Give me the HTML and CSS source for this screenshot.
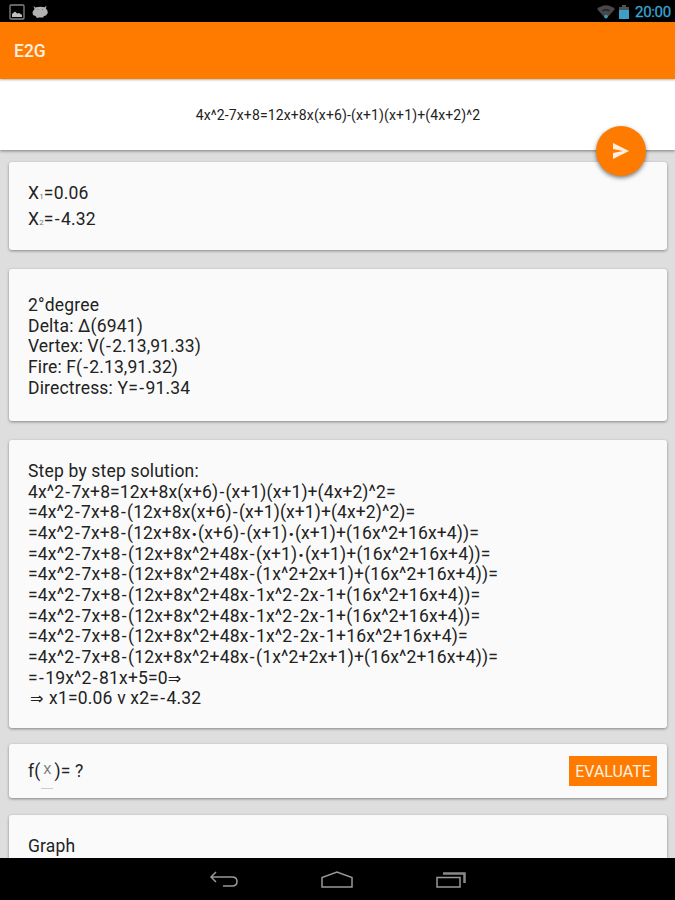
FILE: index.html
```html
<!DOCTYPE html>
<html lang="en">
<head>
<meta charset="utf-8">
<title>E2G</title>
<link rel="stylesheet" href="styles.css">
</head>
<body>
<div class="screen">
  <header class="status">
    <svg class="status-icon" width="16" height="16" viewBox="0 0 16 16"><rect x="1" y="1" width="14" height="14" rx="1" fill="none" stroke="#858585" stroke-width="1.3"/><path d="M3 13V10l3-2.500 2 2 2-.5 3 2v2z" fill="#c0c0c0"/></svg>
    <svg class="status-icon" width="16" height="14" viewBox="0 0 16 14"><path d="M1.5 1l2 1.600Q8 1 12.500 2.200L14.500.7l-.6 2.800Q16 5 15.800 8L14 10.500l-2 .5-1 1.500H7L5 13l-1.500-2L1 10 .5 7l2-3z" fill="#b2b2b2"/><circle cx="6" cy="4.500" r=".6" fill="#777"/><circle cx="10.500" cy="4.500" r=".6" fill="#777"/></svg>
    <span class="spacer"></span>
    <svg class="wifi" width="18" height="14" viewBox="0 0 18 14"><path d="M0 4Q9-3.500 18 4L9 14z" fill="#484848"/><path d="M5.500 6Q9 3.500 12.500 6" fill="none" stroke="#222" stroke-width="1.500"/><circle cx="9" cy="11.500" r="1.800" fill="#329fca"/></svg>
    <svg class="battery" width="10" height="14" viewBox="0 0 10 14"><path d="M0 2h3V0h4v2h3v3H0z" fill="#4b5558"/><path d="M0 5h10v9H0z" fill="#3b9fc8"/></svg>
    <span class="clock">20:00</span>
  </header>
  <div class="appbar">E2G</div>
  <section class="equation">
    <span>4x^2-7x+8=12x+8x(x+6)-(x+1)(x+1)+(4x+2)^2</span>
    <button class="fab" aria-label="Solve"><svg width="16" height="16" viewBox="0 0 16 16"><path d="M0 0L16 8 0 16V10L10 8 0 6z" fill="#ffeedd"/></svg></button>
  </section>
  <main class="content">
    <section class="card roots">
      <div>X<span class="sub">1</span>=0.06</div>
      <div>X<span class="sub">2</span>=<i>-</i>4.32</div>
    </section>
    <section class="card details">
      <div>2°degree</div>
      <div>Delta: Δ(6941)</div>
      <div class="tight">Vertex: V(<i>-</i>2.13,91.33)</div>
      <div class="tight">Fire: F(<i>-</i>2.13,91.32)</div>
      <div>Directress: Y=<i>-</i>91.34</div>
    </section>
    <section class="card steps">
      <div>Step by step solution:</div>
      <div class="tight">4x^2<i>-</i>7x+8=12x+8x(x+6)<i>-</i>(x+1)(x+1)+(4x+2)^2=</div>
      <div class="tight">=4x^2<i>-</i>7x+8<i>-</i>(12x+8x(x+6)<i>-</i>(x+1)(x+1)+(4x+2)^2)=</div>
      <div class="tight">=4x^2<i>-</i>7x+8<i>-</i>(12x+8x<span class="dot">•</span>(x+6)<i>-</i>(x+1)<span class="dot">•</span>(x+1)+(16x^2+16x+4))=</div>
      <div>=4x^2<i>-</i>7x+8<i>-</i>(12x+8x^2+48x<i>-</i>(x+1)<span class="dot">•</span>(x+1)+(16x^2+16x+4))=</div>
      <div>=4x^2<i>-</i>7x+8<i>-</i>(12x+8x^2+48x<i>-</i>(1x^2+2x+1)+(16x^2+16x+4))=</div>
      <div>=4x^2<i>-</i>7x+8<i>-</i>(12x+8x^2+48x<i>-</i>1x^2<i>-</i>2x<i>-</i>1+(16x^2+16x+4))=</div>
      <div>=4x^2<i>-</i>7x+8<i>-</i>(12x+8x^2+48x<i>-</i>1x^2<i>-</i>2x<i>-</i>1+(16x^2+16x+4))=</div>
      <div>=4x^2<i>-</i>7x+8<i>-</i>(12x+8x^2+48x<i>-</i>1x^2<i>-</i>2x<i>-</i>1+16x^2+16x+4)=</div>
      <div>=4x^2<i>-</i>7x+8<i>-</i>(12x+8x^2+48x<i>-</i>(1x^2+2x+1)+(16x^2+16x+4))=</div>
      <div>=<i>-</i>19x^2<i>-</i>81x+5=0<span class="arrow">⇒</span></div>
      <div><span class="arrow lead">⇒</span> x1=0.06 v x2=<i>-</i>4.32</div>
    </section>
    <section class="card evaluate">
      <span>f(</span><span class="field">X</span><span>)= ?</span>
      <span class="spacer"></span>
      <button class="button">EVALUATE</button>
    </section>
    <section class="card graph">Graph</section>
  </main>
  <nav class="navbar">
    <svg width="30" height="18" viewBox="0 0 30 18"><path d="M7 1L2 6l5 5M2 6h21q5 0 5 4.500T23 15h-9" fill="none" stroke="#999" stroke-width="1.500"/></svg>
    <svg width="34" height="18" viewBox="0 0 34 18"><path d="M2 16V6.500L17 1l15 5.500V16z" fill="none" stroke="#999" stroke-width="1.500"/></svg>
    <svg width="32" height="18" viewBox="0 0 32 18"><path d="M2 6.500h23V16H2z" fill="none" stroke="#999" stroke-width="1.500"/><path d="M8 2.500h21.500V12" fill="none" stroke="#8a8a8a" stroke-width="2.500"/></svg>
  </nav>
</div>
</body>
</html>
```
FILE: styles.css
```css
* { box-sizing: border-box; }
body { margin: 0; font-family: Roboto, "Noto Sans", sans-serif; color: #222; }
.screen { width: 675px; height: 900px; display: flex; flex-direction: column; overflow: hidden; background: #dedede; }
.spacer { flex: 1; }
.status { height: 22px; flex: none; background: #000; display: flex; align-items: center; padding: 2px 5px 0 9px; }
.status-icon { margin-right: 7px; }
.wifi { margin-right: 4px; }
.battery { margin-right: 6px; }
.clock { color: #3ba4d0; font-size: 15px; line-height: 20px; -webkit-text-stroke: .3px #3ba4d0; width: 35px; letter-spacing: -.3px; }
.appbar { height: 57px; flex: none; background: #ff7b00; color: #fff0e0; font-size: 17.500px; font-weight: 500; line-height: 59px; padding-left: 14px; box-shadow: 0 1px 2px rgba(0,0,0,.3); z-index: 1; }
.equation { position: relative; height: 71px; flex: none; background: #fff; display: flex; justify-content: center; align-items: center; font-size: 14px; letter-spacing: .13px; padding: 1px 0 0 1px; box-shadow: 0 1px 3px rgba(0,0,0,.45); }
.fab { position: absolute; right: 29px; top: 47px; width: 50px; height: 50px; border: 0; border-radius: 50%; background: #ff7b00; display: flex; align-items: center; justify-content: center; padding: 0; box-shadow: 0 2px 4px rgba(0,0,0,.5); }
.content { flex: 1; min-height: 0; overflow: hidden; padding: 12px 8px 0 9px; font-size: 17.500px; line-height: 20.650px; white-space: nowrap; letter-spacing: .18px; }
/* minus signs get a little extra air */
.content i { font-style: normal; padding: 0 1.200px; }
.tight { letter-spacing: .1px; }
.card { background: #fafafa; border-radius: 3px; box-shadow: 0 1px 3px rgba(0,0,0,.4); padding: 0 19px; }
.roots { height: 88px; padding-top: 18px; line-height: 26px; margin-bottom: 19px; }
.roots div { height: 26px; }
.sub { font-size: 8px; line-height: 1; color: #777; }
.details { height: 152px; padding-top: 26px; margin-bottom: 19px; }
.steps { height: 288px; padding-top: 21px; margin-bottom: 16px; }
.dot { display: inline-block; width: 7.500px; text-align: center; font-family: "DejaVu Sans", sans-serif; font-size: 11px; vertical-align: 1px; line-height: 1; }
.arrow { display: inline-block; font-family: "DejaVu Sans", sans-serif; font-size: 16px; line-height: 1; }
.lead { padding: 0 1px 0 2px; }
.evaluate { height: 54px; display: flex; align-items: center; margin-bottom: 17px; padding-right: 10px; }
.field { width: 12px; height: 32px; font-size: 13px; line-height: 25px; color: #777; border-bottom: 1px solid #ccc; text-align: center; margin: 3px 1px 0 1px; }
.button { border: 0; background: #ff7b00; color: #fff0e0; width: 88px; height: 30px; font: 16px Roboto, sans-serif; padding: 1px 0 0; }
.graph { height: 80px; padding-top: 21px; }
.navbar { height: 42px; flex: none; background: #000; display: flex; justify-content: center; align-items: center; gap: 81px; padding: 2px 0 0 1px; }
```
